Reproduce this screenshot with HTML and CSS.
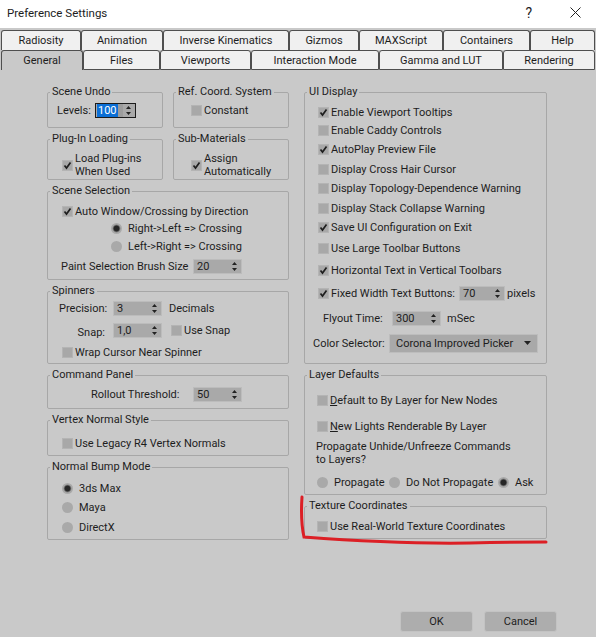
FILE: index.html
```html
<!DOCTYPE html>
<html lang="en">
<head>
<meta charset="utf-8">
<title>Preference Settings</title>
<link rel="stylesheet" href="styles.css">
</head>
<body>
<div class="titlebar">
  <span class="title">Preference Settings</span>
  <span class="help">?</span>
  <svg class="close" width="11" height="11" viewBox="0 0 11 11"><path d="M0.5 0.5 L10.5 10.5 M10.5 0.5 L0.5 10.5" stroke="#222" stroke-width="1" fill="none"/></svg>
</div>

<div class="tabs">
  <div class="tabrow row1">
    <div class="tab">Radiosity</div>
    <div class="tab">Animation</div>
    <div class="tab">Inverse Kinematics</div>
    <div class="tab">Gizmos</div>
    <div class="tab">MAXScript</div>
    <div class="tab">Containers</div>
    <div class="tab">Help</div>
  </div>
  <div class="tabrow row2">
    <div class="tab active">General</div>
    <div class="tab">Files</div>
    <div class="tab">Viewports</div>
    <div class="tab">Interaction Mode</div>
    <div class="tab">Gamma and LUT</div>
    <div class="tab">Rendering</div>
  </div>
</div>

<div class="panel">
  <div class="col">
    <div class="pair">
      <fieldset class="group h44">
        <legend>Scene Undo</legend>
        <div class="row mt2 pl9">
          <span class="lbl w38">Levels:</span>
          <div class="spin focus w41"><span class="val"><span class="sel">100</span></span><span class="gap"></span><svg class="arr" width="5" height="9" viewBox="0 0 5 9"><path d="M2.5 0 L5 3 L0 3Z M2.5 9 L5 6 L0 6Z" fill="#222"/></svg></div>
        </div>
      </fieldset>
      <fieldset class="group h44">
        <legend>Ref. Coord. System</legend>
        <div class="row mt2 pl17">
          <span class="cb"></span><span>Constant</span>
        </div>
      </fieldset>
    </div>
    <div class="pair">
      <fieldset class="group h49">
        <legend>Plug-In Loading</legend>
        <div class="row tall mt5 pl14">
          <span class="cb on"><svg width="9" height="9" viewBox="0 0 9 9"><path d="M1.5 4.5 L3.5 7 L7.5 1.5" stroke="#1e1e1e" stroke-width="1.7" fill="none"/></svg></span>
          <span class="two">Load Plug-ins<br>When Used</span>
        </div>
      </fieldset>
      <fieldset class="group h49">
        <legend>Sub-Materials</legend>
        <div class="row tall mt5 pl17">
          <span class="cb on"><svg width="9" height="9" viewBox="0 0 9 9"><path d="M1.5 4.5 L3.5 7 L7.5 1.5" stroke="#1e1e1e" stroke-width="1.7" fill="none"/></svg></span>
          <span class="two">Assign<br>Automatically</span>
        </div>
      </fieldset>
    </div>

    <fieldset class="group h97">
      <legend>Scene Selection</legend>
      <div class="row mt4 pl14">
        <span class="cb on"><svg width="9" height="9" viewBox="0 0 9 9"><path d="M1.5 4.5 L3.5 7 L7.5 1.5" stroke="#1e1e1e" stroke-width="1.7" fill="none"/></svg></span>
        <span>Auto Window/Crossing by Direction</span>
      </div>
      <div class="row mt1 pl63"><span class="rb on"></span><span>Right-&gt;Left =&gt; Crossing</span></div>
      <div class="row mt2 pl63"><span class="rb"></span><span>Left-&gt;Right =&gt; Crossing</span></div>
      <div class="row mt4 pl13">
        <span class="lbl w132">Paint Selection Brush Size</span>
        <div class="spin w49"><span class="val">20</span><svg class="arr" width="5" height="9" viewBox="0 0 5 9"><path d="M2.5 0 L5 3 L0 3Z M2.5 9 L5 6 L0 6Z" fill="#222"/></svg></div>
      </div>
    </fieldset>

    <fieldset class="group h81">
      <legend>Spinners</legend>
      <div class="row mt1 pl11">
        <span class="lbl right w46">Precision:</span>
        <div class="spin w49 ml8"><span class="val">3</span><svg class="arr" width="5" height="9" viewBox="0 0 5 9"><path d="M2.5 0 L5 3 L0 3Z M2.5 9 L5 6 L0 6Z" fill="#222"/></svg></div>
        <span class="ml7">Decimals</span>
      </div>
      <div class="row mt6 pl11">
        <span class="lbl right w46 lower">Snap:</span>
        <div class="spin w49 ml8"><span class="val">1,0</span><svg class="arr" width="5" height="9" viewBox="0 0 5 9"><path d="M2.5 0 L5 3 L0 3Z M2.5 9 L5 6 L0 6Z" fill="#222"/></svg></div>
        <span class="cb ml9"></span><span>Use Snap</span>
      </div>
      <div class="row mt6 pl14"><span class="cb"></span><span>Wrap Cursor Near Spinner</span></div>
    </fieldset>

    <fieldset class="group h42">
      <legend>Command Panel</legend>
      <div class="row mt3 pl43">
        <span class="lbl w102">Rollout Threshold:</span>
        <div class="spin w49"><span class="val">50</span><svg class="arr" width="5" height="9" viewBox="0 0 5 9"><path d="M2.5 0 L5 3 L0 3Z M2.5 9 L5 6 L0 6Z" fill="#222"/></svg></div>
      </div>
    </fieldset>

    <fieldset class="group h44">
      <legend>Vertex Normal Style</legend>
      <div class="row mt7 pl14"><span class="cb"></span><span>Use Legacy R4 Vertex Normals</span></div>
    </fieldset>

    <fieldset class="group h81">
      <legend>Normal Bump Mode</legend>
      <div class="row mt5 pl14"><span class="rb on"></span><span>3ds Max</span></div>
      <div class="row mt3 pl14"><span class="rb"></span><span>Maya</span></div>
      <div class="row mt4 pl14"><span class="rb"></span><span>DirectX</span></div>
    </fieldset>
  </div>

  <div class="col">
    <fieldset class="group h280">
      <legend>UI Display</legend>
      <div class="row mt4 pl13"><span class="cb on"><svg width="9" height="9" viewBox="0 0 9 9"><path d="M1.5 4.5 L3.5 7 L7.5 1.5" stroke="#1e1e1e" stroke-width="1.7" fill="none"/></svg></span><span>Enable Viewport Tooltips</span></div>
      <div class="row mt2 pl13"><span class="cb"></span><span>Enable Caddy Controls</span></div>
      <div class="row mt3 pl13"><span class="cb on"><svg width="9" height="9" viewBox="0 0 9 9"><path d="M1.5 4.5 L3.5 7 L7.5 1.5" stroke="#1e1e1e" stroke-width="1.7" fill="none"/></svg></span><span>AutoPlay Preview File</span></div>
      <div class="row mt4 pl13"><span class="cb"></span><span>Display Cross Hair Cursor</span></div>
      <div class="row mt3 pl13"><span class="cb"></span><span>Display Topology-Dependence Warning</span></div>
      <div class="row mt4 pl13"><span class="cb"></span><span>Display Stack Collapse Warning</span></div>
      <div class="row mt3 pl13"><span class="cb on"><svg width="9" height="9" viewBox="0 0 9 9"><path d="M1.5 4.5 L3.5 7 L7.5 1.5" stroke="#1e1e1e" stroke-width="1.7" fill="none"/></svg></span><span>Save UI Configuration on Exit</span></div>
      <div class="row mt5 pl13"><span class="cb"></span><span>Use Large Toolbar Buttons</span></div>
      <div class="row mt6 pl13"><span class="cb on"><svg width="9" height="9" viewBox="0 0 9 9"><path d="M1.5 4.5 L3.5 7 L7.5 1.5" stroke="#1e1e1e" stroke-width="1.7" fill="none"/></svg></span><span>Horizontal Text in Vertical Toolbars</span></div>
      <div class="row mt7 pl13">
        <span class="cb on"><svg width="9" height="9" viewBox="0 0 9 9"><path d="M1.5 4.5 L3.5 7 L7.5 1.5" stroke="#1e1e1e" stroke-width="1.7" fill="none"/></svg></span>
        <span class="lbl w128">Fixed Width Text Buttons:</span>
        <div class="spin w46"><span class="val">70</span><svg class="arr" width="5" height="9" viewBox="0 0 5 9"><path d="M2.5 0 L5 3 L0 3Z M2.5 9 L5 6 L0 6Z" fill="#222"/></svg></div>
        <span class="ml2">pixels</span>
      </div>
      <div class="row mt9 pl18">
        <span class="lbl w69">Flyout Time:</span>
        <div class="spin w49"><span class="val">300</span><svg class="arr" width="5" height="9" viewBox="0 0 5 9"><path d="M2.5 0 L5 3 L0 3Z M2.5 9 L5 6 L0 6Z" fill="#222"/></svg></div>
        <span class="ml6">mSec</span>
      </div>
      <div class="row big mt7 pl8">
        <span class="lbl w76">Color Selector:</span>
        <div class="dropdown"><span>Corona Improved Picker</span><svg width="7" height="4" viewBox="0 0 7 4"><path d="M0 0 L7 0 L3.5 4Z" fill="#222"/></svg></div>
      </div>
    </fieldset>

    <fieldset class="group h128">
      <legend>Layer Defaults</legend>
      <div class="row mt9 pl12"><span class="cb"></span><span><u>D</u>efault to By Layer for New Nodes</span></div>
      <div class="row mt10 pl12"><span class="cb"></span><span><u>N</u>ew Lights Renderable By Layer</span></div>
      <p class="note">Propagate Unhide/Unfreeze Commands<br>to Layers?</p>
      <div class="row mt8 pl12">
        <span class="opt w72"><span class="rb"></span><span>Propagate</span></span>
        <span class="opt w109"><span class="rb"></span><span>Do Not Propagate</span></span>
        <span class="opt"><span class="rb on"></span><span>Ask</span></span>
      </div>
    </fieldset>

    <fieldset class="group h41">
      <legend>Texture Coordinates</legend>
      <div class="row mt4 pl12"><span class="cb"></span><span>Use Real-World Texture Coordinates</span></div>
    </fieldset>
  </div>
</div>

<div class="buttons">
  <div class="btn">OK</div>
  <div class="btn">Cancel</div>
</div>

<svg class="mark" width="596" height="637" viewBox="0 0 596 637">
  <path d="M302 497 C301 512 302 528 304 537 C330 539 400 544 470 543 C510 542 535 542 546 542" stroke="#dc1f25" stroke-width="3" fill="none" stroke-linecap="round"/>
</svg>
</body>
</html>
```

FILE: styles.css
```css
* { box-sizing: border-box; }

html, body { margin: 0; }

body {
  width: 596px;
  height: 637px;
  position: relative;
  overflow: hidden;
  background: #c9c9c9;
  color: #1d1d1d;
  font-family: Roboto, "Liberation Sans", sans-serif;
  font-size: 11px;
}

/* window caption */
.titlebar {
  height: 28px;
  background: #fff;
  display: flex;
  align-items: center;
  padding-left: 7px;
  font-size: 11.5px;
}
.title { flex: 1; margin-top: -2px; }
.help { font-size: 14px; margin-right: 38px; margin-top: -2px; }
.close { margin-right: 15px; margin-top: -3px; }

/* two rows of tabs */
.tabs { margin-top: 2px; padding: 0 1px; }
.tabrow { display: grid; height: 20px; }
.row1 { grid-template-columns: 80px 82px 126px 70px 84px 87px 1fr; }
.row2 { grid-template-columns: 82px 77px 91px 128px 124px 1fr; }
.tab {
  background: #f0f0f0;
  border: 1px solid #4f4f4f;
  border-radius: 3px 3px 0 0;
  display: flex;
  align-items: center;
  justify-content: center;
  white-space: nowrap;
}
.row1 .tab { border-bottom: none; }
.row2 .tab.active { background: #c9c9c9; border-bottom: none; }

/* tab page */
.panel {
  display: grid;
  grid-template-columns: 242px 243px;
  column-gap: 15px;
  align-items: start;
  padding: 14px 0 0 47px;
}
.col { display: flex; flex-direction: column; gap: 3px; }
.pair { display: grid; grid-template-columns: 1fr 1fr; column-gap: 10px; }

.group {
  margin: 0;
  padding: 0;
  min-width: 0;
  border: 1px solid #a7a7a7;
  border-radius: 2px;
}
.group legend {
  margin-left: 2px;
  padding: 0 2px;
  line-height: 16px;
}
.h41 { height: 41px; }
.h42 { height: 42px; }
.h44 { height: 44px; }
.h49 { height: 49px; }
.h81 { height: 81px; }
.h97 { height: 97px; }
.h128 { height: 128px; }
.h280 { height: 280px; }

.row {
  display: flex;
  align-items: center;
  height: 16px;
  white-space: nowrap;
}
.row.tall { height: 26px; }
.row.big { height: 20px; }
.two { line-height: 13px; }

.lbl { flex: none; }
.lbl.right { text-align: right; }
.lower { padding-top: 5px; }
.note { margin: 6px 0 0; padding-left: 11px; line-height: 13px; }
.opt { display: flex; align-items: center; flex: none; }

/* checkbox and radio */
.cb {
  flex: none;
  width: 11px;
  height: 11px;
  margin-right: 2px;
  background: #a8a8a8;
  border: 1px solid #b4b4b4;
  display: flex;
  align-items: center;
  justify-content: center;
}
.rb {
  flex: none;
  width: 11px;
  height: 11px;
  margin-right: 6px;
  border-radius: 50%;
  background: #a9a9a9;
}
.rb.on { background: radial-gradient(circle, #262626 0 2.6px, #6e6e6e 3.3px, #a9a9a9 4.3px); }

/* spinners and drop-down */
.spin {
  flex: none;
  display: flex;
  align-items: center;
  height: 15px;
  padding-left: 3px;
  background: #a9a9a9;
  border: 1px solid #bcbcbc;
}
.spin .val { flex: 1; }
.spin .arr { margin-right: 4px; }
.spin.focus { border-color: #1b1b1b; padding-left: 1px; }
.spin.focus .val { flex: none; }
.spin .gap { flex: 1; align-self: stretch; background: #9c9c9c; margin-right: 3px; }
.sel { background: #0b6fd6; color: #fff; padding: 0 1px; }

.dropdown {
  flex: none;
  width: 149px;
  height: 19px;
  padding: 0 6px;
  display: flex;
  align-items: center;
  justify-content: space-between;
  background: #a9a9a9;
  border: 1px solid #bdbdbd;
}

/* dialog buttons */
.buttons {
  display: flex;
  justify-content: flex-end;
  gap: 11px;
  margin-top: 71px;
  padding-right: 39px;
}
.btn {
  width: 73px;
  height: 21px;
  display: flex;
  align-items: center;
  justify-content: center;
  background: #adadad;
  border: 1px solid #c3c3c3;
  border-radius: 3px;
}

/* hand-drawn highlight stroke */
.mark { position: absolute; left: 0; top: 0; pointer-events: none; }

/* spacing helpers */
.mt1 { margin-top: 1px; }
.mt2 { margin-top: 2px; }
.mt3 { margin-top: 3px; }
.mt4 { margin-top: 4px; }
.mt5 { margin-top: 5px; }
.mt6 { margin-top: 6px; }
.mt7 { margin-top: 7px; }
.mt8 { margin-top: 8px; }
.mt9 { margin-top: 9px; }
.mt10 { margin-top: 10px; }
.pl8 { padding-left: 8px; }
.pl9 { padding-left: 9px; }
.pl11 { padding-left: 11px; }
.pl12 { padding-left: 12px; }
.pl13 { padding-left: 13px; }
.pl14 { padding-left: 14px; }
.pl17 { padding-left: 17px; }
.pl18 { padding-left: 18px; }
.pl43 { padding-left: 43px; }
.pl63 { padding-left: 63px; }
.ml2 { margin-left: 2px; }
.ml6 { margin-left: 6px; }
.ml7 { margin-left: 7px; }
.ml8 { margin-left: 8px; }
.ml9 { margin-left: 9px; }
.w38 { width: 38px; }
.w41 { width: 41px; }
.w46 { width: 46px; }
.w49 { width: 49px; }
.w69 { width: 69px; }
.w72 { width: 72px; }
.w76 { width: 76px; }
.w102 { width: 102px; }
.w109 { width: 109px; }
.w128 { width: 128px; }
.w132 { width: 132px; }
```
